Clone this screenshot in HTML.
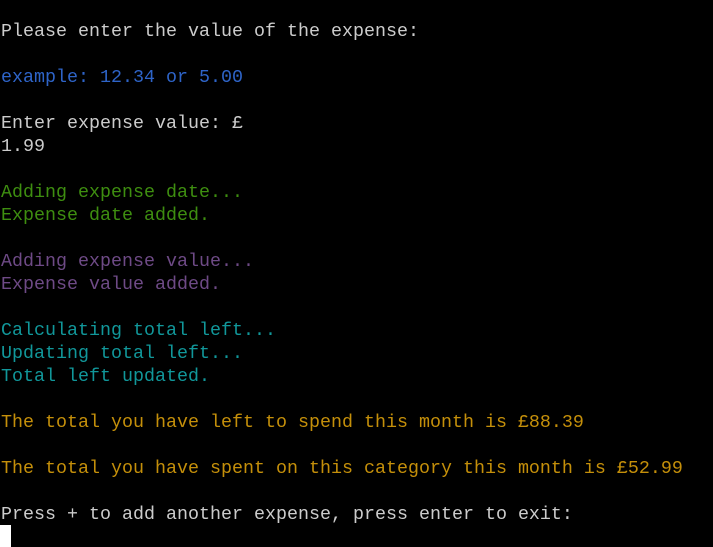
<!DOCTYPE html>
<html><head><style>
html,body{margin:0;padding:0;background:#000;width:713px;height:547px;overflow:hidden}
pre{margin:0;padding:19.5px 0 0 1px;font-family:"Liberation Mono",monospace;font-size:18.33px;line-height:23px;color:#cccccc;white-space:pre}
.b{color:#2e64c8}.g{color:#3e8e10}.p{color:#6e4a86}.c{color:#11979a}.o{color:#c48f0a}
.cur{position:absolute;left:0;top:525px;width:11px;height:22px;background:#fff}
</style></head><body>
<pre>Please enter the value of the expense:

<span class="b">example: 12.34 or 5.00</span>

Enter expense value: £
1.99

<span class="g">Adding expense date...
Expense date added.</span>

<span class="p">Adding expense value...
Expense value added.</span>

<span class="c">Calculating total left...
Updating total left...
Total left updated.</span>

<span class="o">The total you have left to spend this month is £88.39</span>

<span class="o">The total you have spent on this category this month is £52.99</span>

Press + to add another expense, press enter to exit:</pre>
<div class="cur"></div>
</body></html>
